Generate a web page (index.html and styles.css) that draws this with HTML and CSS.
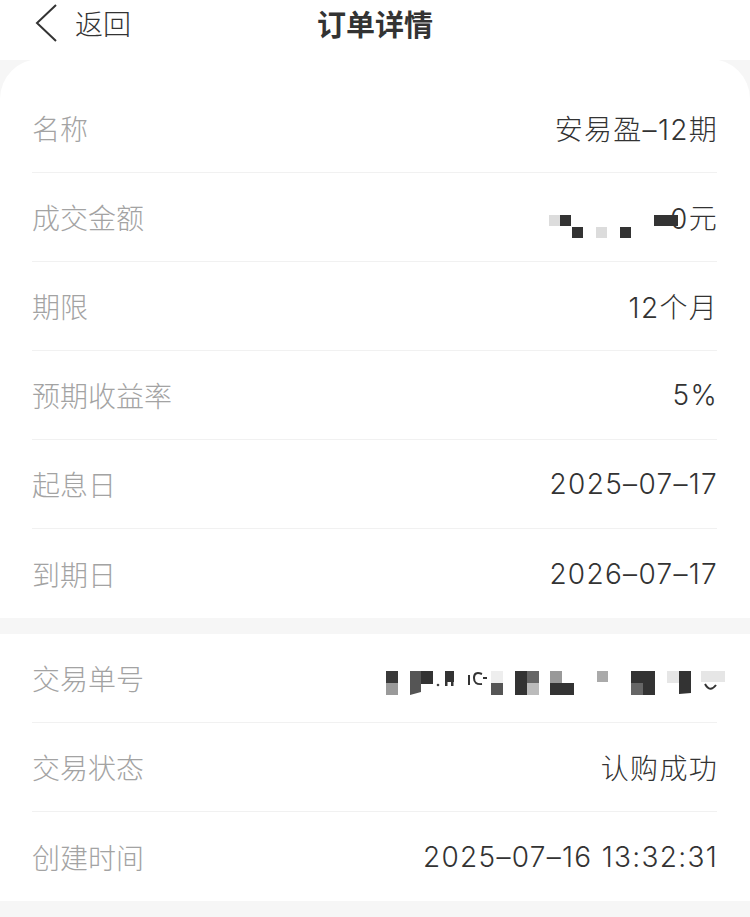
FILE: index.html
```html
<!DOCTYPE html>
<html lang="zh-CN">
<head>
  <meta charset="UTF-8">
  <meta name="viewport" content="width=device-width, initial-scale=1.0">
  <title>订单详情</title>
  <link rel="stylesheet" href="styles.css">
</head>
<body>
<div class="page">
  <div class="header">
    <div class="back">
      <svg class="back-icon" width="24" height="40" viewBox="0 0 24 40">
        <path d="M21 2 L2 20 L21 38" fill="none" stroke="#333" stroke-width="2" stroke-linejoin="miter"/>
      </svg>
      <span>返回</span>
    </div>
    <div class="title">订单详情</div>
    <div></div>
  </div>

  <!-- 产品信息 -->
  <div class="card card-first">
    <div class="row">
      <span class="label">名称</span>
      <span class="value">安易盈–12期</span>
    </div>
    <div class="row">
      <span class="label">成交金额</span>
      <span class="value">
        <svg class="mosaic mosaic-amount" width="129" height="46" viewBox="0 0 129 46">
          <rect x="0" y="21" width="11" height="11" fill="#dcdcdc"/>
          <rect x="11" y="21" width="11" height="11" fill="#333"/>
          <rect x="23" y="33" width="11" height="11" fill="#333"/>
          <rect x="47" y="33" width="11" height="11" fill="#dcdcdc"/>
          <rect x="71" y="33" width="11" height="11" fill="#333"/>
          <rect x="105" y="21" width="24" height="11" fill="#333"/>
        </svg>0元
      </span>
    </div>
    <div class="row">
      <span class="label">期限</span>
      <span class="value">12个月</span>
    </div>
    <div class="row">
      <span class="label">预期收益率</span>
      <span class="value">5%</span>
    </div>
    <div class="row">
      <span class="label">起息日</span>
      <span class="value">2025–07–17</span>
    </div>
    <div class="row">
      <span class="label">到期日</span>
      <span class="value">2026–07–17</span>
    </div>
  </div>

  <!-- 交易信息 -->
  <div class="card">
    <div class="row">
      <span class="label">交易单号</span>
      <span class="value">
        <svg class="mosaic mosaic-order" width="339" height="48" viewBox="0 0 339 48">
          <rect x="0" y="17" width="12" height="12" fill="#3a3a3a"/>
          <rect x="0" y="29" width="12" height="12" fill="#9a9a9a"/>
          <polygon points="24,17 35,17 35,38 24,41" fill="#555"/>
          <rect x="35" y="17" width="12" height="13" fill="#333"/>
          <circle cx="52" cy="31" r="1.3" fill="#444"/>
          <rect x="59" y="17" width="9" height="11" fill="#333"/>
          <rect x="59" y="28" width="2.5" height="4" fill="#333"/>
          <rect x="65" y="28" width="2.5" height="4" fill="#333"/>
          <path d="M83 21 L83 31 M96 20 Q88 17 88 24 Q88 31 96 30 M97 24 L101 24" fill="none" stroke="#333" stroke-width="2"/>
          <rect x="105" y="17" width="12" height="12" fill="#eee"/>
          <rect x="105" y="29" width="12" height="12" fill="#555"/>
          <rect x="129" y="17" width="12" height="24" fill="#333"/>
          <rect x="141" y="17" width="12" height="12" fill="#666"/>
          <rect x="141" y="29" width="12" height="12" fill="#bbb"/>
          <rect x="164" y="17" width="12" height="12" fill="#999"/>
          <rect x="164" y="29" width="24" height="12" fill="#333"/>
          <rect x="211" y="17" width="11" height="11" fill="#aaa"/>
          <rect x="245" y="17" width="24" height="24" fill="#333"/>
          <rect x="245" y="29" width="12" height="12" fill="#666"/>
          <rect x="281" y="17" width="12" height="12" fill="#e6e6e6"/>
          <polygon points="293,17 305,17 305,39 293,40" fill="#333"/>
          <rect x="315" y="17" width="24" height="11" fill="#e6e6e6"/>
          <path d="M319 30 Q324 39 330 31" fill="none" stroke="#333" stroke-width="2"/>
        </svg>
      </span>
    </div>
    <div class="row">
      <span class="label">交易状态</span>
      <span class="value">认购成功</span>
    </div>
    <div class="row">
      <span class="label">创建时间</span>
      <span class="value">2025–07–16 13:32:31</span>
    </div>
  </div>
</div>
</body>
</html>
```

FILE: styles.css
```css
body, html {
  margin: 0;
  padding: 0;
  background: #f6f6f6;
  font-family: "Noto Sans CJK SC", "Noto Sans", sans-serif;
  color: #333;
}
.page {
  width: 750px;
  min-height: 917px;
}
.header {
  display: grid;
  grid-template-columns: 1fr auto 1fr;
  align-items: center;
  height: 46px;
  padding-bottom: 14px;
  background: #fff;
}
.back {
  display: flex;
  align-items: center;
  padding-left: 35px;
  font-size: 28px;
  font-weight: 300;
  color: #333;
}
.back-icon {
  margin-right: 16px;
}
.title {
  font-size: 29px;
  font-weight: 600;
  color: #333;
}
.card {
  background: #fff;
  padding: 0 33px 0 32px;
}
.card-first {
  margin-top: -1px;
  padding-top: 25px;
  margin-bottom: 16px;
  border-radius: 40px 40px 0 0;
}
.row {
  display: flex;
  justify-content: space-between;
  align-items: center;
  box-sizing: border-box;
  height: 89px;
  border-bottom: 1px solid #f1f1f1;
}
.row:last-child {
  border-bottom: none;
}
.label {
  font-size: 28px;
  font-weight: 300;
  color: #a3a3a3;
}
.value {
  display: flex;
  align-items: center;
  font-family: Inter, "Noto Sans CJK SC", sans-serif;
  font-size: 28px;
  font-weight: 300;
  letter-spacing: 1.3px;
  margin-right: -1px;
  color: #333;
}
.mosaic {
  display: block;
}
.mosaic-amount {
  margin-right: -8px;
}
.mosaic-order {
  margin-right: -7px;
}
```
